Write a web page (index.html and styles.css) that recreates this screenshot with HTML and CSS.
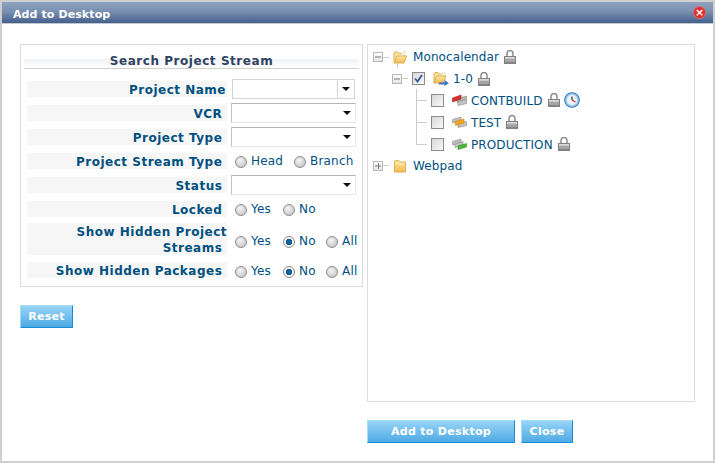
FILE: index.html
```html
<!DOCTYPE html>
<html lang="en">
<head>
    <meta charset="UTF-8">
    <title>Add to Desktop</title>
    <link rel="stylesheet" href="styles.css">
</head>
<body>

    <svg class="defs" width="0" height="0">
        <defs>
            <linearGradient id="lockBody" x1="0" y1="0" x2="0" y2="1">
                <stop offset="0" stop-color="#ececec"/>
                <stop offset="1" stop-color="#747474"/>
            </linearGradient>
            <linearGradient id="folderFill" x1="0" y1="0" x2="0" y2="1">
                <stop offset="0" stop-color="#fdeaa4"/>
                <stop offset="1" stop-color="#f5b84e"/>
            </linearGradient>
            <symbol id="lock" viewBox="0 0 12 14">
                <path d="M3 7V3.500a3 3 0 0 1 6 0V7" fill="none" stroke="#8c8c8c" stroke-width="1.500"/>
                <rect x="0.500" y="6.500" width="11" height="7" fill="url(#lockBody)" stroke="#808080"/>
                <path d="M1 9.500h10M1 11.500h10" stroke="#a4a4a4"/>
            </symbol>
            <symbol id="folderOpen" viewBox="0 0 14 14">
                <path d="M1 13V3l1-1h3l1 1.500h4V6" fill="#fbe3a0" stroke="#dfae52"/>
                <path d="M6 6 12 1v5z" fill="#fff" stroke="#ead9a4"/>
                <path d="M1 13 4 6h9.500L11 13z" fill="url(#folderFill)" stroke="#dfae52"/>
            </symbol>
            <symbol id="folderClosed" viewBox="0 0 14 14">
                <path d="M1.500 13V2.500l1-1h3L7 3h5.500v10z" fill="url(#folderFill)" stroke="#dfae52"/>
                <path d="M2.500 5h9" stroke="#fdf0c4"/>
            </symbol>
            <symbol id="folderArrow" viewBox="0 0 16 15">
                <path d="M1 12V2.500l1-1h3L6 3h4v2" fill="#fbe3a0" stroke="#dfae52"/>
                <path d="M6 5 11 1v4z" fill="#fff" stroke="#ead9a4"/>
                <path d="M1 12 3.500 5h9.500L10.500 12z" fill="url(#folderFill)" stroke="#dfae52"/>
                <path d="M6 11.500h5.500V9l4.500 3.200L11.500 15v-1.500H6z" fill="#3a76c0"/>
            </symbol>
            <symbol id="streamRed" viewBox="0 0 15 12">
                <path d="M5 4.500 14.500 2v4L5 8.500z" fill="#b4b4b4" stroke="#8a8a8a" stroke-width=".6"/>
                <path d="M6 7.500 14.500 5.500v4L6 11.500z" fill="#c4c4c4" stroke="#8a8a8a" stroke-width=".6"/>
                <path d="M0.500 4 9 1v4L0.500 8z" fill="#d8322c" stroke="#a82420" stroke-width=".6"/>
            </symbol>
            <symbol id="streamOrange" viewBox="0 0 15 12">
                <path d="M0.500 3.500 9 1v3.500L0.500 7z" fill="#c0c0c0" stroke="#8a8a8a" stroke-width=".6"/>
                <path d="M6 7.500 14.500 5.500v4L6 11.500z" fill="#c4c4c4" stroke="#8a8a8a" stroke-width=".6"/>
                <path d="M3.500 5.500 12 3v4L3.500 9.500z" fill="#f4a81c" stroke="#c88410" stroke-width=".6"/>
            </symbol>
            <symbol id="streamGreen" viewBox="0 0 15 12">
                <path d="M0.500 3.500 9 1v3.500L0.500 7z" fill="#c0c0c0" stroke="#8a8a8a" stroke-width=".6"/>
                <path d="M3 6 11 3.500v3.500L3 9.500z" fill="#c4c4c4" stroke="#8a8a8a" stroke-width=".6"/>
                <path d="M6 8 14.500 5.500v3.500L6 11.500z" fill="#4cb83a" stroke="#2f9024" stroke-width=".6"/>
            </symbol>
            <symbol id="clock" viewBox="0 0 16 16">
                <circle cx="8" cy="8" r="7.300" fill="#a8d0f0" stroke="#3674b4" stroke-width="1.100"/>
                <circle cx="8" cy="8" r="5" fill="#eef6fc"/>
                <path d="M8 4.500V8" stroke="#222" stroke-width="1.100"/>
                <path d="M8 8l3.500 2" stroke="#c22" stroke-width="1.100"/>
            </symbol>
        </defs>
    </svg>

    <div class="dialog">
        <div class="title-bar">
            <span class="title">Add to Desktop</span>
            <span class="close-x">&#215;</span>
        </div>

        <div class="dialog-body">
            <div class="left-col">
                <form class="search-panel">
                    <h3 class="panel-heading"><span>Search Project Stream</span></h3>

                    <div class="row first">
                        <label class="row-label">Project Name</label>
                        <div class="combo editable"><span class="arrow"></span></div>
                    </div>
                    <div class="row">
                        <label class="row-label">VCR&nbsp;</label>
                        <div class="combo"><span class="arrow"></span></div>
                    </div>
                    <div class="row">
                        <label class="row-label">Project Type&nbsp;</label>
                        <div class="combo"><span class="arrow"></span></div>
                    </div>
                    <div class="row">
                        <label class="row-label">Project Stream Type&nbsp;</label>
                        <div class="radios">
                            <label class="radio r-head"><input type="radio" name="streamType">Head</label>
                            <label class="radio"><input type="radio" name="streamType">Branch</label>
                        </div>
                    </div>
                    <div class="row">
                        <label class="row-label">Status&nbsp;</label>
                        <div class="combo"><span class="arrow"></span></div>
                    </div>
                    <div class="row">
                        <label class="row-label">Locked&nbsp;</label>
                        <div class="radios">
                            <label class="radio r-yes"><input type="radio" name="locked">Yes</label>
                            <label class="radio"><input type="radio" name="locked">No</label>
                        </div>
                    </div>
                    <div class="row tall">
                        <label class="row-label">Show Hidden Project Streams&nbsp;</label>
                        <div class="radios">
                            <label class="radio r-yes"><input type="radio" name="hiddenStreams">Yes</label>
                            <label class="radio r-no"><input type="radio" name="hiddenStreams" checked>No</label>
                            <label class="radio"><input type="radio" name="hiddenStreams">All</label>
                        </div>
                    </div>
                    <div class="row packages">
                        <label class="row-label">Show Hidden Packages&nbsp;</label>
                        <div class="radios">
                            <label class="radio r-yes"><input type="radio" name="hiddenPackages">Yes</label>
                            <label class="radio r-no"><input type="radio" name="hiddenPackages" checked>No</label>
                            <label class="radio"><input type="radio" name="hiddenPackages">All</label>
                        </div>
                    </div>
                </form>
                <div class="button-row">
                    <button type="button" class="btn btn-reset">Reset</button>
                </div>
            </div>

            <div class="right-col">
                <div class="tree">
                    <div class="node">
                        <span class="expander minus"></span>
                        <span class="stub"></span>
                        <svg class="folder"><use href="#folderOpen"/></svg>
                        <span class="node-text">Monocalendar</span>
                        <svg class="lock"><use href="#lock"/></svg>
                    </div>
                    <div class="node level-1">
                        <span class="expander minus"></span>
                        <span class="stub"></span>
                        <span class="check checked"><svg viewBox="0 0 9 9"><path d="M1 4.500 3.500 7.500 8 1" fill="none" stroke="#34589c" stroke-width="1.800"/></svg></span>
                        <svg class="folder-arrow"><use href="#folderArrow"/></svg>
                        <span class="node-text">1-0</span>
                        <svg class="lock"><use href="#lock"/></svg>
                    </div>
                    <div class="children">
                        <div class="node level-2">
                            <span class="check"></span>
                            <svg class="stream"><use href="#streamRed"/></svg>
                            <span class="node-text">CONTBUILD</span>
                            <svg class="lock"><use href="#lock"/></svg>
                            <svg class="clock"><use href="#clock"/></svg>
                        </div>
                        <div class="node level-2">
                            <span class="check"></span>
                            <svg class="stream"><use href="#streamOrange"/></svg>
                            <span class="node-text">TEST</span>
                            <svg class="lock"><use href="#lock"/></svg>
                        </div>
                        <div class="node level-2">
                            <span class="check"></span>
                            <svg class="stream"><use href="#streamGreen"/></svg>
                            <span class="node-text">PRODUCTION</span>
                            <svg class="lock"><use href="#lock"/></svg>
                        </div>
                    </div>
                    <div class="node last">
                        <span class="expander plus"></span>
                        <span class="stub"></span>
                        <svg class="folder"><use href="#folderClosed"/></svg>
                        <span class="node-text">Webpad</span>
                    </div>
                </div>
                <div class="button-row">
                    <button type="button" class="btn btn-add">Add to Desktop</button>
                    <button type="button" class="btn btn-close">Close</button>
                </div>
            </div>
        </div>
    </div>

</body>
</html>
```

FILE: styles.css
```css
html, body {
    margin: 0;
    padding: 0;
}
body {
    width: 715px;
    height: 463px;
    overflow: hidden;
    font-family: "DejaVu Sans", Verdana, sans-serif;
    font-size: 12px;
    color: #00507f;
    background: #fff;
}
.defs {
    position: absolute;
}
.dialog {
    box-sizing: border-box;
    width: 715px;
    height: 463px;
    border: 2px solid #cfcfcf;
    background: #fff;
}
.title-bar {
    display: flex;
    align-items: center;
    justify-content: space-between;
    height: 22px;
    padding: 0 8px 0 11px;
    background: linear-gradient(#8ea3c0, #7a90b1 45%, #44608a);
    border-bottom: 1px solid #c4c8cf;
    box-sizing: border-box;
}
.title {
    margin-top: 4px;
    color: #fff;
    font-weight: bold;
    font-size: 11px;
    letter-spacing: 0.1px;
}
.close-x {
    display: block;
    width: 11px;
    height: 11px;
    border-radius: 50%;
    background: #e0302c;
    color: #fff;
    font-size: 11px;
    font-weight: bold;
    line-height: 11px;
    text-align: center;
    box-shadow: 0 0 0 1px #d96a66;
}
.dialog-body {
    display: flex;
    gap: 4px;
    padding: 20px 18px 0;
}
.left-col {
    width: 343px;
}
.right-col {
    width: 328px;
}
.search-panel {
    box-sizing: border-box;
    height: 243px;
    border: 1px solid #dcdcdc;
    padding: 10px 3px 0 3px;
}
.panel-heading {
    margin: 0 0 12px;
    height: 13px;
    font-size: 12px;
    line-height: 13px;
    font-weight: bold;
    letter-spacing: 0.55px;
    color: #2f4263;
    text-align: center;
    background: linear-gradient(#fff 0, #fff 4px, #f0f2f5 4px, #fff 13px);
    border-bottom: 1px solid #d0d0d0;
}
.row {
    display: flex;
    align-items: center;
    height: 16px;
    margin-bottom: 8px;
    padding-left: 3px;
}
.row.tall {
    height: 32px;
    margin-top: -2px;
    margin-bottom: 7px;
}
.row-label {
    box-sizing: border-box;
    flex: none;
    width: 200px;
    height: 100%;
    padding-top: 1px;
    background: #f6f6f6;
    font-weight: bold;
    font-size: 12px;
    line-height: 16px;
    letter-spacing: 0.5px;
    text-align: right;
}
.first .row-label {
    padding-right: 1px;
}
.combo {
    position: relative;
    flex: none;
    box-sizing: border-box;
    width: 125px;
    height: 20px;
    margin-left: 4px;
    background: #fff;
    border: 1px solid #e4e8e8;
    border-top-color: #b4b4b4;
    border-left-color: #c4c4c4;
}
.combo.editable {
    width: 123px;
    margin-left: 5px;
    border: 1px solid #d4d4d4;
}
.combo.editable::after {
    content: "";
    position: absolute;
    top: 0;
    bottom: 0;
    right: 16px;
    border-left: 1px solid #d4d4d4;
}
.arrow {
    position: absolute;
    right: 4px;
    top: 7px;
    border-left: 4px solid transparent;
    border-right: 4px solid transparent;
    border-top: 4px solid #111;
}
.radios {
    display: flex;
    margin-left: 8px;
}
.tall .radios {
    margin-top: 4px;
}
.packages .radios {
    margin-top: 2px;
}
.radio {
    display: flex;
    align-items: center;
    font-size: 12px;
    line-height: 16px;
    letter-spacing: 0.2px;
}
.radio input {
    appearance: none;
    box-sizing: border-box;
    flex: none;
    width: 12px;
    height: 12px;
    margin: 1px 4px 0 0;
    border: 1px solid #8c8c8c;
    border-radius: 50%;
    background: radial-gradient(circle at 40% 35%, #f4f4f4, #bcbcbc);
}
.radio input:checked {
    background: radial-gradient(circle, #0c6ca8 0, #0c5a90 3px, #f4f4f4 3.5px);
}
.r-head {
    width: 59px;
}
.r-yes {
    width: 48px;
}
.r-no {
    width: 43px;
}
.button-row {
    display: flex;
    gap: 6px;
    margin-top: 18px;
}
.btn {
    box-sizing: border-box;
    height: 23px;
    padding: 0;
    border: 1px solid #a4dcf8;
    border-right-color: #1b8cd6;
    border-bottom-color: #1b8cd6;
    background: linear-gradient(#98d4f6, #4eaae4);
    color: #fff;
    font-family: inherit;
    font-weight: bold;
    font-size: 11px;
    letter-spacing: 0.3px;
}
.btn-reset {
    width: 53px;
}
.btn-add {
    width: 148px;
}
.btn-close {
    width: 52px;
}
.tree {
    box-sizing: border-box;
    height: 358px;
    border: 1px solid #dcdcdc;
    padding: 1px 0 0 5px;
}
.node {
    position: relative;
    display: flex;
    align-items: center;
    height: 22px;
}
.node.level-1,
.node.last {
    height: 21px;
}
.node-text {
    font-size: 12px;
    line-height: 16px;
    letter-spacing: 0.1px;
}
.level-2 .node-text {
    margin-top: 2px;
}
.node .lock {
    flex: none;
    width: 12px;
    height: 14px;
    margin-left: 5px;
}
.expander {
    position: relative;
    flex: none;
    box-sizing: border-box;
    width: 10px;
    height: 10px;
    border: 1px solid #b8b8b8;
    background: linear-gradient(#fff, #e4e4e4);
}
.expander::before {
    content: "";
    position: absolute;
    left: 1px;
    right: 1px;
    top: 3px;
    height: 2px;
    background: #777;
    transform: scaleY(0.5);
}
.expander.plus::after {
    content: "";
    position: absolute;
    top: 1px;
    bottom: 1px;
    left: 3.500px;
    width: 1px;
    background: #777;
}
.stub {
    flex: none;
    width: 6px;
    height: 1px;
    background: #ccc;
}
.folder {
    flex: none;
    width: 14px;
    height: 14px;
    margin-left: 4px;
    margin-right: 6px;
}
.level-1 {
    padding-left: 19px;
}
.level-1::before {
    content: "";
    position: absolute;
    left: 24px;
    top: -5px;
    height: 5px;
    border-left: 1px solid #ccc;
}
.level-1 .check {
    margin-left: 4px;
}
.folder-arrow {
    flex: none;
    width: 16px;
    height: 15px;
    margin: 0 4px 0 8px;
}
.check {
    display: block;
    flex: none;
    box-sizing: border-box;
    width: 13px;
    height: 13px;
    padding: 1px;
    border: 1px solid #8c8c8c;
    background: linear-gradient(135deg, #d8d8d8, #f8f8f8);
}
.check svg {
    display: block;
    width: 9px;
    height: 9px;
}
.children {
    position: relative;
}
.children::before {
    content: "";
    position: absolute;
    left: 43px;
    top: 0;
    height: 55px;
    border-left: 1px solid #ccc;
}
.level-2 {
    padding-left: 58px;
}
.level-2::before {
    content: "";
    position: absolute;
    left: 43px;
    top: 11px;
    width: 11px;
    border-top: 1px solid #ccc;
}
.stream {
    flex: none;
    width: 15px;
    height: 12px;
    margin: 0 4px 0 8px;
}
.clock {
    flex: none;
    width: 16px;
    height: 16px;
    margin-left: 4px;
}
```
